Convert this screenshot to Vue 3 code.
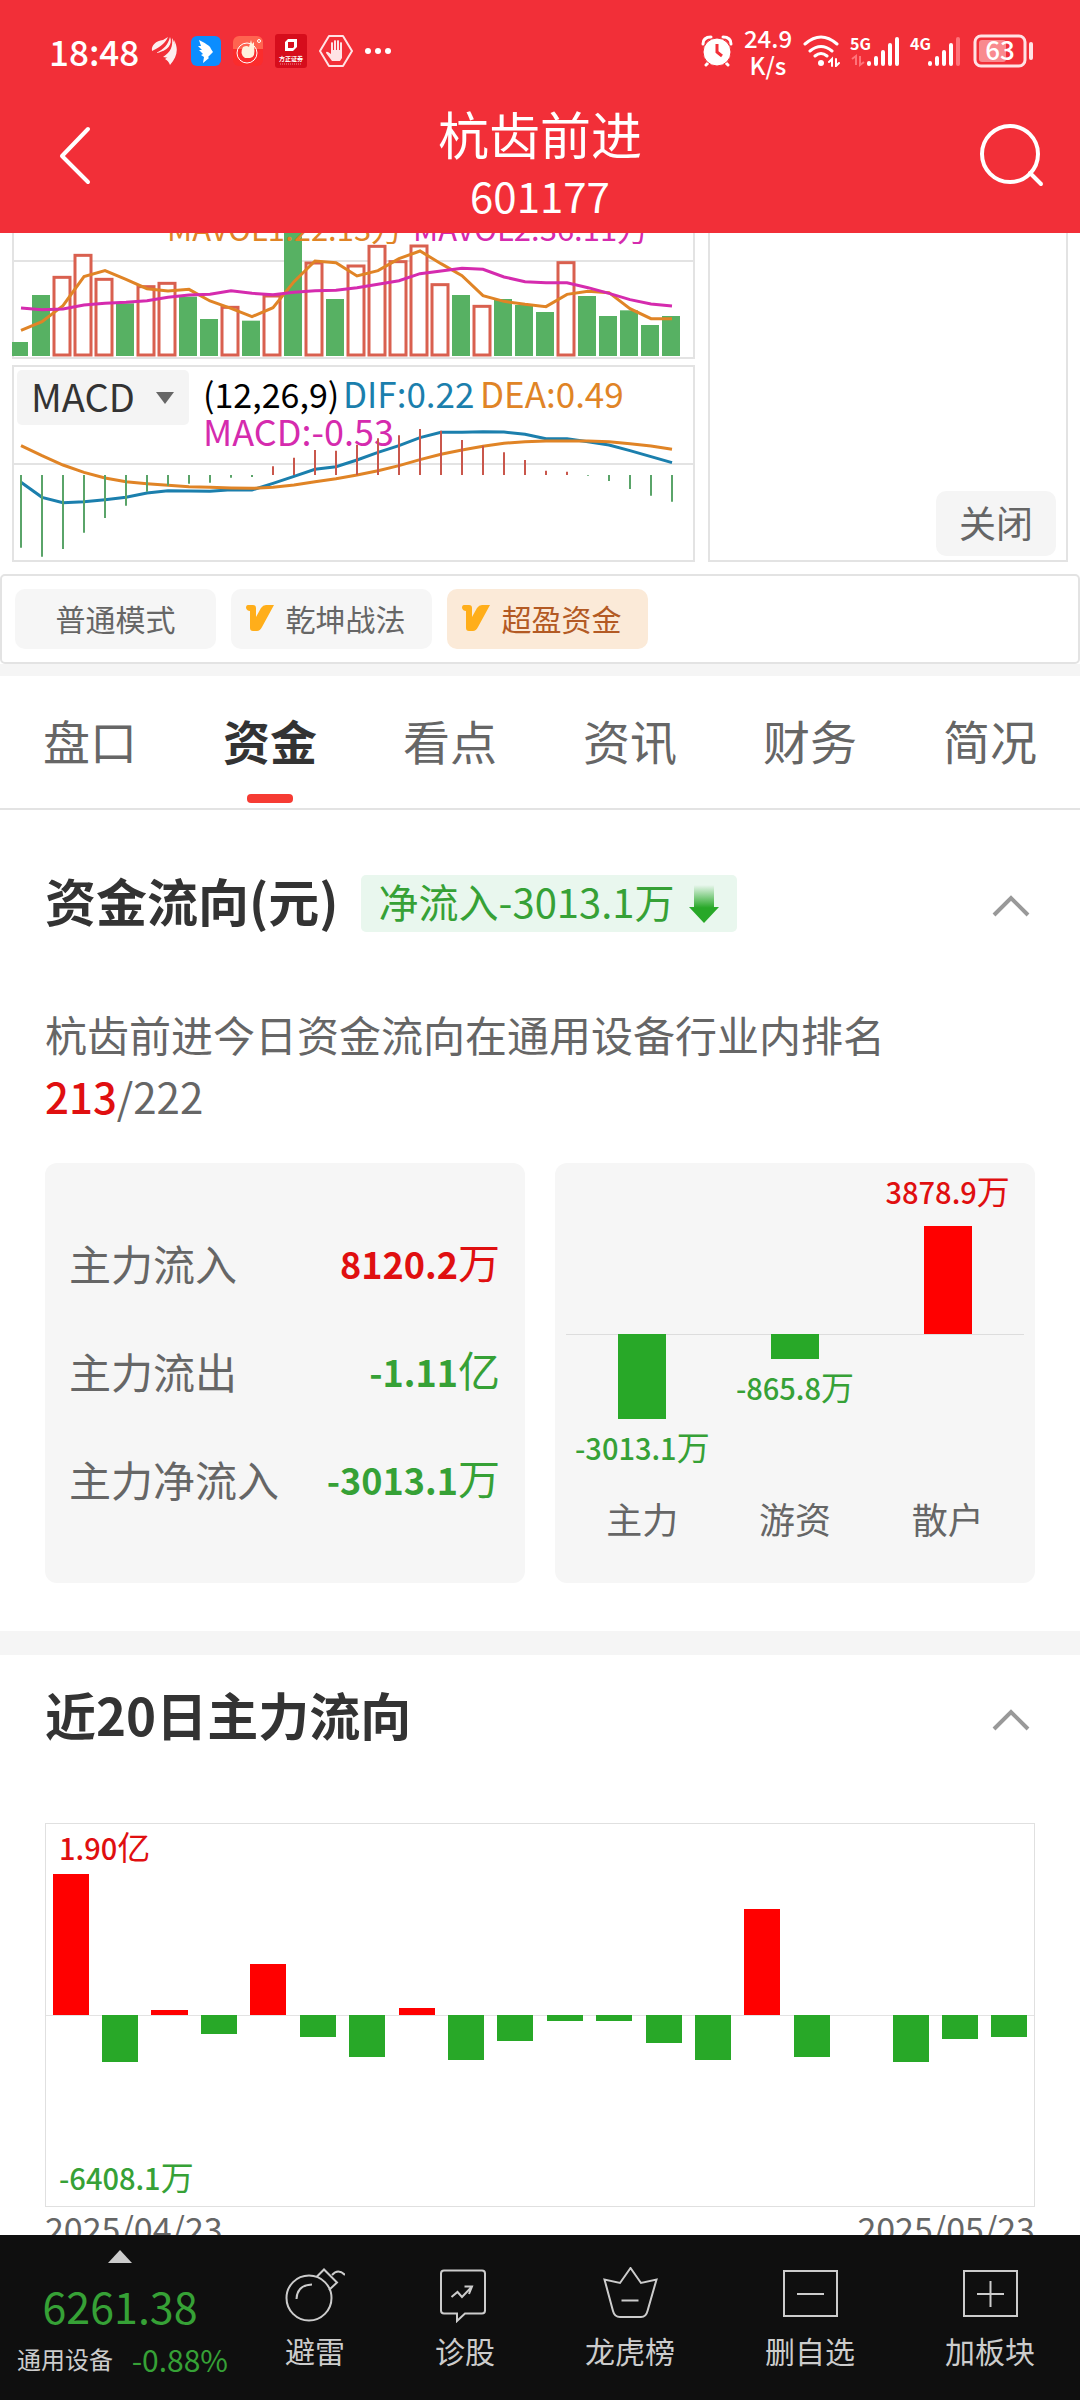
<script setup>
import { ref } from "vue";

// K-line indicator data, in thirds of a pixel from the top of each pane.
// up = hollow red candle, otherwise solid green.
const volume = [
    [327, 0], [186, 0], [130, 1], [64, 1], [136, 1], [211, 0], [158, 1], [148, 1],
    [191, 0], [258, 0], [220, 1], [263, 0], [186, 1], [-30, 0], [87, 1], [198, 0],
    [96, 1], [37, 1], [83, 1], [36, 1], [152, 1], [186, 0], [217, 1], [198, 0],
    [216, 0], [237, 0], [86, 1], [189, 0], [249, 0], [232, 0], [276, 0], [249, 0],
].map(([top, up]) => ({ top: top / 3, up: !!up }));
const mavol1 = [
    292, 266, 218, 131, 113, 139, 167, 174, 169, 204, 226, 251, 224, 146, 84, 89,
    129, 113, 77, 54, 92, 128, 188, 205, 214, 221, 184, 175, 179, 227, 257, 257,
];
const mavol2 = [
    225, 230, 228, 216, 211, 208, 203, 193, 186, 184, 173, 181, 185, 178, 173, 172,
    164, 154, 143, 122, 114, 106, 109, 132, 146, 149, 149, 164, 181, 200, 213, 219,
];
const macd = [
    548, 575, 552, 503, 459, 422, 380, 362, 356, 353, 338, 336, 304, 278, 255, 257,
    239, 220, 211, 192, 197, 225, 242, 262, 285, 317, 320, 332, 348, 372, 392, 410,
];
const dif = [
    352, 397, 413, 410, 404, 397, 384, 377, 378, 379, 374, 375, 355, 334, 313, 305,
    285, 262, 242, 218, 202, 202, 200, 201, 208, 221, 221, 230, 240, 257, 275, 293,
];
const dea = [
    242, 272, 300, 322, 339, 350, 356, 361, 365, 367, 369, 370, 367, 360, 350, 341,
    330, 317, 302, 284, 268, 255, 244, 235, 230, 228, 228, 228, 230, 236, 243, 253,
];
const line = (values) => values.map((v, i) => `${9 + i * 21},${v / 3}`).join(" ");

const indicator = ref("MACD");
const modes = ["普通模式", "乾坤战法", "超盈资金"];
const mode = ref("超盈资金");
const tabs = ["盘口", "资金", "看点", "资讯", "财务", "简况"];
const tab = ref("资金");

const flows = [
    { label: "主力流入", value: "8120.2", unit: "万", up: true },
    { label: "主力流出", value: "-1.11", unit: "亿" },
    { label: "主力净流入", value: "-3013.1", unit: "万" },
];
const groups = [
    { label: "主力", value: "-3013.1", bar: 85 },
    { label: "游资", value: "-865.8", bar: 25 },
    { label: "散户", value: "3878.9", bar: 108, up: true },
];

// bar heights around the zero axis
const days = [
    141, -47, 5, -19, 51, -22, -42, 7, -45, -26, -6, -6, -28, -45, 106, -42, 0, -47, -24, -22,
];
const axis = 191;
const dayStyle = (v) => ({
    height: Math.abs(v) + "px",
    marginTop: (v > 0 ? axis - v : axis) + "px",
});
</script>

<template>
    <div class="page">
        <header class="top">
            <div class="status">
                <div class="status__side">
                    <span class="status__time">18:48</span>
                    <svg width="28" height="30" viewBox="0 0 28 30" fill="#fff" opacity=".92">
                        <path d="M1 15C0 9 5 5 12 4l5-3c-2 5-6 9-16 14z" />
                        <path d="M5 17C13 13 17 9 19 1c3 7-2 14-14 16z" />
                        <path d="M12 21C20 16 22 10 21 2c4 6 3 14-3 20z" />
                        <path d="M19 29c-1-3-3-5-5-6 7-5 10-10 9-19 5 9 3 17-4 25z" />
                    </svg>
                    <svg width="30" height="30" viewBox="0 0 30 30">
                        <rect width="30" height="30" rx="6" fill="#0b8dff" />
                        <path d="M8 4c5 3 11 5 12 9l2 3-5 5 1 1-6 5 1-6-3-2 2-1-4-4 3 0-4-4 3 0z" fill="#fff" />
                    </svg>
                    <svg width="30" height="30" viewBox="0 0 30 30">
                        <rect width="30" height="30" rx="6" fill="#fb2c2c" />
                        <path d="M0 6a6 6 0 0 1 6-6h18a6 6 0 0 1 6 6v7H0z" fill="#ff6450" />
                        <circle cx="14" cy="17" r="10" fill="none" stroke="#fff" stroke-width="1" />
                        <path d="M10 11q4-2 6 0l2-7 1 4 2-2v5q2 10-4 11h-5q-6-4-2-11z" fill="#fff1dc" />
                        <circle cx="26" cy="5" r="1.5" fill="none" stroke="#fff" />
                    </svg>
                    <svg width="32" height="34" viewBox="0 0 32 34">
                        <rect width="32" height="34" rx="3" fill="#d60d1c" />
                        <path d="M10 8l3-3h9v8l-4 4h-8zM13 8v6h5l1-1V8z" fill="#fff" fill-rule="evenodd" />
                        <text x="16" y="27" text-anchor="middle" font-size="6" font-weight="700" fill="#fff">方正证券</text>
                        <path d="M5 30h22" stroke="#f08a90" stroke-width="1" stroke-dasharray="1 1" />
                    </svg>
                    <svg width="34" height="34" viewBox="0 0 34 34">
                        <path d="M10 2h14l9 15-9 15H10L1 17z" fill="none" stroke="#ffe3e5" stroke-width="2" stroke-linejoin="round" />
                        <path d="M13 27L7 19q0-2 2-1l3 2V9q1-2 2 0v7h1V7q1-2 2 0v9h1V7q1-2 2 0v9h1V9q1-2 2 0v15l-2 3z" fill="#ffe3e5" />
                    </svg>
                    <svg width="26" height="30" viewBox="0 0 26 30" fill="#fff">
                        <circle cx="3" cy="15" r="3" /><circle cx="13" cy="15" r="3" /><circle cx="23" cy="15" r="3" />
                    </svg>
                </div>
                <div class="status__side status__side--right">
                    <svg width="32" height="32" viewBox="0 0 32 32">
                        <path d="M2 9q0-7 8-7M30 9q0-7-8-7M5 30l4-4M27 30l-4-4" fill="none" stroke="#fff" stroke-width="3" stroke-linecap="round" />
                        <circle cx="16" cy="17" r="14" fill="#fff" stroke="#f22f38" />
                        <path d="M16 9v8l5 4" fill="none" stroke="#f22f38" stroke-width="3" />
                    </svg>
                    <span class="status__rate">24.9<br />K/s</span>
                    <svg width="37" height="32" viewBox="0 0 37 32" fill="none" stroke="#fff" stroke-width="3" stroke-linecap="round">
                        <path d="M2 9q16-14 32 0M7 16q11-9 22 0M12 21q6-5 12 0" />
                        <circle cx="18" cy="28" r="3" fill="#fff" stroke="none" />
                        <path d="M26 27l3-3v7M33 24v7l3-3" stroke-width="2" />
                    </svg>
                    <svg class="signal" width="50" height="32" viewBox="0 0 50 32">
                        <text class="status__net" x="0" y="15">5G</text>
                        <path d="M2 24l4-3v9M10 21v9l4-3" fill="none" stroke="#ff737a" stroke-width="2" />
                        <path d="M19 28v1M26 23v6M33 17v12M40 10v19M47 4v25" stroke="#fff" stroke-width="4" stroke-linecap="round" />
                    </svg>
                    <svg class="signal" width="52" height="32" viewBox="0 0 52 32">
                        <text class="status__net" x="0" y="15">4G</text>
                        <path d="M20 28v1M27 23v6M34 17v12M41 10v19" stroke="#fff" stroke-width="4" stroke-linecap="round" />
                        <path d="M48 4v25" stroke="#ff737a" stroke-width="4" stroke-linecap="round" />
                    </svg>
                    <svg class="signal" width="62" height="34" viewBox="0 0 62 34">
                        <rect x="3" y="2" width="50" height="30" rx="6" fill="none" stroke="#ffe3e5" stroke-width="3" />
                        <rect x="7" y="6" width="27" height="22" rx="3" fill="#f98a8f" />
                        <path d="M59 10v14" stroke="#ffe3e5" stroke-width="4" stroke-linecap="round" />
                        <text x="28" y="26" text-anchor="middle" font-size="26" font-weight="500" fill="#fff">63</text>
                    </svg>
                </div>
            </div>
            <div class="nav">
                <button type="button" class="nav__btn" aria-label="返回">
                    <svg width="34" height="60" viewBox="0 0 34 60"><path d="M30 4L4 31l26 26" fill="none" stroke="#fff" stroke-width="4" stroke-linecap="round" stroke-linejoin="round" /></svg>
                </button>
                <h1 class="nav__title">杭齿前进<span>601177</span></h1>
                <button type="button" class="nav__btn nav__btn--end" aria-label="搜索">
                    <svg width="66" height="66" viewBox="0 0 66 66" fill="none" stroke="#fff" stroke-width="4" stroke-linecap="round"><circle cx="31" cy="32" r="28" /><path d="M51 51l11 11" /></svg>
                </button>
            </div>
        </header>

        <main class="body">
            <section class="kline">
                <div class="kline__left">
                    <svg class="pane" viewBox="0 0 683 126">
                        <path d="M0 28h683" class="rule" />
                        <path d="M1 0v125h681V0" class="rule" />
                        <g v-for="(b, i) in volume" :key="i">
                            <rect v-if="b.up" :x="21 * i" :y="b.top + 1" width="16" :height="121 - b.top" class="candle" />
                            <rect v-else :x="Math.max(0, 21 * i - 1)" :y="b.top" :width="i ? 18 : 16" :height="123 - b.top" fill="#57b163" />
                        </g>
                        <text x="155" y="8" font-size="31" fill="#e08426">MAVOL1:22.13万</text>
                        <text x="401" y="8" font-size="31" fill="#d52bae">MAVOL2:36.11万</text>
                        <polyline :points="line(mavol1)" class="curve" stroke="#e08426" />
                        <polyline :points="line(mavol2)" class="curve" stroke="#d52bae" />
                    </svg>
                    <div class="macd">
                        <svg class="pane" viewBox="0 0 683 197">
                            <path d="M0 99h683" class="rule" />
                            <rect x="1" y="1" width="681" height="195" class="rule" />
                            <text x="191" y="43" font-size="34" fill="#000">(12,26,9)</text>
                            <text x="331" y="43" font-size="35" fill="#1b7fad">DIF:0.22</text>
                            <text x="468" y="43" font-size="35" fill="#e08426">DEA:0.49</text>
                            <text x="191" y="81" font-size="36" fill="#d52bae">MACD:-0.53</text>
                            <polyline :points="line(dif)" class="curve" stroke="#1b7fad" />
                            <polyline :points="line(dea)" class="curve" stroke="#e08426" />
                            <path
                                v-for="(v, i) in macd"
                                :key="i"
                                :d="`M${9 + i * 21} 110V${v / 3}`"
                                :stroke="v < 330 ? '#c9574c' : '#5aa469'"
                                stroke-width="2"
                            />
                        </svg>
                        <div class="picker">
                            <select v-model="indicator" aria-label="指标">
                                <option>MACD</option>
                            </select>
                            <svg width="18" height="12" viewBox="0 0 18 12"><path d="M0 0h18l-9 12z" fill="#666" /></svg>
                        </div>
                    </div>
                </div>
                <div class="kline__right">
                    <button type="button" class="close">关闭</button>
                </div>
            </section>

            <div class="modes">
                <button
                    v-for="(m, i) in modes"
                    :key="m"
                    type="button"
                    class="mode"
                    :class="{ on: m === mode }"
                    @click="mode = m"
                >
                    <svg v-if="i" width="28" height="26" viewBox="0 0 28 26">
                        <path d="M2 0h5q3 0 3 3v9l5-9q2-3 5-3h8L16 22q-2 4-5 4H7q-3 0-3-3V6Q1 6 0 3 0 0 2 0z" fill="#ffae1a" />
                    </svg>
                    {{ m }}
                </button>
            </div>

            <nav class="tabs">
                <button
                    v-for="t in tabs"
                    :key="t"
                    type="button"
                    class="tab"
                    :class="{ on: t === tab }"
                    @click="tab = t"
                >
                    {{ t }}
                </button>
            </nav>

            <section class="block">
                <div class="block__head">
                    <h2>资金流向(元)</h2>
                    <span class="badge">
                        <span class="badge__text">净流入-3013.1万</span>
                        <svg width="30" height="38" viewBox="0 0 30 38">
                            <defs>
                                <linearGradient id="fade" x1="0" y1="0" x2="0" y2="1">
                                    <stop offset="0" stop-color="#28a828" stop-opacity="0" />
                                    <stop offset=".6" stop-color="#28a828" />
                                </linearGradient>
                            </defs>
                            <path d="M5 0h20v22h5L15 38 0 22h5z" fill="url(#fade)" />
                        </svg>
                    </span>
                    <button type="button" class="fold" aria-label="收起">
                        <svg width="40" height="24" viewBox="0 0 40 24"><path d="M3 21L20 4l17 17" /></svg>
                    </button>
                </div>
                <p class="rank">杭齿前进今日资金流向在通用设备行业内排名<br /><b>213</b>/222</p>
                <div class="cards">
                    <dl class="card flows">
                        <div v-for="f in flows" :key="f.label" class="flow">
                            <dt>{{ f.label }}</dt>
                            <dd class="num" :class="{ up: f.up }"><b>{{ f.value }}</b>{{ f.unit }}</dd>
                        </div>
                    </dl>
                    <div class="card groups">
                        <div v-for="g in groups" :key="g.label" class="group">
                            <div class="group__half group__half--up">
                                <template v-if="g.up">
                                    <span class="num up"><b>{{ g.value }}</b>万</span>
                                    <i class="up" :style="{ height: g.bar + 'px' }" />
                                </template>
                            </div>
                            <div class="group__half group__half--down">
                                <template v-if="!g.up">
                                    <i :style="{ height: g.bar + 'px' }" />
                                    <span class="num"><b>{{ g.value }}</b>万</span>
                                </template>
                            </div>
                            <span class="group__label">{{ g.label }}</span>
                        </div>
                    </div>
                </div>
            </section>

            <section class="block block--days">
                <div class="block__head">
                    <h2>近20日主力流向</h2>
                    <button type="button" class="fold" aria-label="收起">
                        <svg width="40" height="24" viewBox="0 0 40 24"><path d="M3 21L20 4l17 17" /></svg>
                    </button>
                </div>
                <div class="days">
                    <span class="num up days__max"><b>1.90</b>亿</span>
                    <span class="num days__min"><b>-6408.1</b>万</span>
                    <div v-for="(v, i) in days" :key="i" class="day">
                        <i :class="{ up: v > 0 }" :style="dayStyle(v)" />
                    </div>
                </div>
                <div class="dates"><span>2025/04/23</span><span>2025/05/23</span></div>
            </section>
        </main>

        <footer class="bar">
            <div class="quote">
                <div class="quote__index">
                    <svg width="24" height="13" viewBox="0 0 24 13"><path d="M12 0l12 13H0z" fill="#ccc" /></svg>
                    <strong>6261.38</strong>
                </div>
                <span class="quote__row">通用设备<em>-0.88%</em></span>
            </div>
            <nav class="tools">
                <button type="button" class="tool">
                    <svg viewBox="0 0 60 56"><circle cx="24" cy="31" r="22.5" /><path d="M31.5 10L39 2.5l13 13L44 23M47 8q6-7 13 0M11.5 32Q12 18 27 17.5" /></svg>
                    避雷
                </button>
                <button type="button" class="tool">
                    <svg viewBox="0 0 60 56"><path d="M22 46.500H9q-3 0-3-3v-37q0-3 3-3h38q3 0 3 3v37q0 3-3 3H30L22 54zM16.500 30l6-5 4.500 5 10-10.500M29.500 19.500H37L34 27" /></svg>
                    诊股
                </button>
                <button type="button" class="tool">
                    <svg viewBox="0 0 60 56"><path d="M30.500 1L20 16 4.500 12.500 13 44q1.500 6 7 6h21q5 0 6.500-6l9-31.500L41 16zM21.500 33.500h17" /></svg>
                    龙虎榜
                </button>
                <button type="button" class="tool">
                    <svg viewBox="0 0 60 56"><path d="M4 4h53v45H4zM17 27h27" /></svg>
                    删自选
                </button>
                <button type="button" class="tool">
                    <svg viewBox="0 0 60 56"><path d="M4 4h53v45H4zM17 27h27M30.500 14v26" /></svg>
                    加板块
                </button>
            </nav>
        </footer>
    </div>
</template>

<style>
body {
    margin: 0;
}
</style>

<style scoped>
.page {
    --red: #e00f10;
    --green: #36a136;
    display: flex;
    flex-direction: column;
    height: 100vh;
    background: #fff;
    color: #666;
    font-family: "Noto Sans CJK SC", sans-serif;
}
button {
    border: none;
    padding: 0;
    background: none;
    color: inherit;
    font: inherit;
    cursor: pointer;
}
svg {
    display: block;
    flex: none;
}
h1,
h2,
p,
dl,
dd {
    margin: 0;
    font-weight: 400;
}

/* header */
.top {
    flex: none;
    background: #f22f38;
    color: #fff;
}
.status {
    height: 102px;
    padding: 0 46px 0 49px;
    box-sizing: border-box;
    display: flex;
    justify-content: space-between;
}
.status__side {
    display: flex;
    align-items: center;
    gap: 12px;
}
.status__side--right {
    gap: 10px;
}
.signal {
    overflow: visible;
}
.status__time {
    font-size: 35px;
    line-height: 48px;
    font-weight: 500;
}
.status__rate {
    width: 50px;
    text-align: center;
    font-size: 24px;
    line-height: 27px;
    font-weight: 500;
}
.status__net {
    font-size: 16px;
    font-weight: 700;
    fill: #fff;
}
.nav {
    display: flex;
    justify-content: space-between;
    align-items: flex-start;
    height: 131px;
    padding: 0 35px 0 58px;
}
.nav__btn {
    display: flex;
    align-items: center;
    width: 67px;
    height: 106px;
}
.nav__btn--end {
    justify-content: flex-end;
    width: 90px;
}
.nav__title {
    font-size: 51px;
    line-height: 62px;
    text-align: center;
}
.nav__title span {
    display: block;
    font-size: 42px;
}

.body {
    flex: 1;
    min-height: 0;
    overflow: hidden;
}

/* k-line indicators */
.kline {
    display: grid;
    grid-template-columns: 683fr 360fr;
    gap: 13px;
    padding: 0 12px;
}
.kline__left {
    display: grid;
    gap: 6px;
}
.pane {
    width: 100%;
}
.rule {
    fill: none;
    stroke: #e3e3e3;
    stroke-width: 2;
}
.candle {
    fill: #fff;
    stroke: #d9604f;
    stroke-width: 3;
}
.curve {
    fill: none;
    stroke-width: 3;
}
.macd {
    position: relative;
}
.picker {
    position: absolute;
    left: 5px;
    top: 5px;
    display: flex;
    align-items: center;
    border-radius: 5px;
    background: #f4f4f4;
}
.picker select {
    appearance: none;
    border: none;
    background: none;
    width: 172px;
    height: 55px;
    padding: 0 0 4px 14px;
    font: inherit;
    font-size: 38px;
    line-height: 51px;
    color: #333;
}
.picker svg {
    position: absolute;
    right: 15px;
    pointer-events: none;
}
.kline__right {
    display: flex;
    align-items: flex-end;
    justify-content: flex-end;
    padding: 0 10px 4px;
    border: 2px solid #e3e3e3;
    border-top: none;
}
.close {
    width: 120px;
    height: 65px;
    padding-bottom: 3px;
    border-radius: 10px;
    background: #f5f5f5;
    font-size: 37px;
}

/* mode chips */
.modes {
    display: flex;
    gap: 15px;
    margin-top: 12px;
    padding: 13px;
    border: 2px solid #e3e3e3;
    border-radius: 5px;
}
.mode {
    width: 201px;
    height: 60px;
    padding-bottom: 3px;
    display: flex;
    align-items: center;
    justify-content: center;
    gap: 12px;
    border-radius: 10px;
    background: #f6f6f6;
    font-size: 30px;
}
.mode svg {
    margin-left: -12px;
}
.mode.on {
    background: #fbead8;
    color: #b35a24;
}

/* tabs */
.tabs {
    display: flex;
    border-top: 12px solid #f5f5f5;
    border-bottom: 2px solid #e3e3e3;
}
.tab {
    position: relative;
    flex: 1;
    height: 132px;
    padding-bottom: 6px;
    font-size: 47px;
}
.tab.on {
    color: #333;
    font-weight: 700;
}
.tab.on::after {
    content: "";
    position: absolute;
    left: 50%;
    bottom: 5px;
    width: 46px;
    height: 9px;
    margin-left: -23px;
    border-radius: 4px;
    background: #f63b33;
}

/* sections */
.block {
    padding: 65px 45px 48px;
}
.block--days {
    padding-top: 34px;
    border-top: 24px solid #f5f5f5;
}
.block__head {
    display: flex;
    align-items: center;
}
.block__head h2 {
    padding-bottom: 6px;
    color: #333;
    font-size: 51px;
    line-height: 51px;
    font-weight: 700;
}
.badge {
    display: flex;
    align-items: center;
    gap: 14px;
    margin-left: 22px;
    padding: 0 18px;
    border-radius: 5px;
    background: #e9f7ee;
    color: var(--green);
    font-size: 40px;
}
.badge__text {
    padding-bottom: 4px;
    line-height: 53px;
}
.fold {
    margin-left: auto;
    padding: 8px 4px 4px;
}
.fold path {
    fill: none;
    stroke: #999;
    stroke-width: 4;
}
.rank {
    margin-top: 71px;
    font-size: 42px;
    line-height: 62px;
}
.rank b {
    color: var(--red);
    font-weight: 500;
}
.cards {
    display: grid;
    grid-template-columns: 1fr 1fr;
    gap: 30px;
    margin-top: 36px;
}
.card {
    border-radius: 12px;
    background: #f6f6f6;
}
.num {
    color: var(--green);
    font-size: 33px;
    line-height: 40px;
    white-space: nowrap;
}
.num b {
    font-size: 29px;
    font-weight: 500;
}
.num.up {
    color: var(--red);
}
i {
    display: block;
    background: #28a828;
}
i.up {
    background: #f00;
}
.flows {
    display: flex;
    flex-direction: column;
    justify-content: center;
    padding: 0 25px 6px 24px;
    font-size: 42px;
}
.flow {
    display: flex;
    align-items: center;
    justify-content: space-between;
    height: 108px;
}
.flow .num {
    font-size: 42px;
}
.flow .num b {
    font-size: 36px;
    font-weight: 700;
}
.groups {
    display: grid;
    grid-template-columns: repeat(3, 1fr);
    padding: 0 11px 43px;
}
.group,
.group__half {
    display: flex;
    flex-direction: column;
    align-items: center;
}
.group i {
    width: 48px;
}
.group__half {
    align-self: stretch;
}
.group__half--up {
    height: 171px;
    justify-content: flex-end;
    gap: 15px;
}
.group__half--down {
    height: 161px;
    gap: 7px;
    border-top: 1px solid #ddd;
}
.group__half--down i {
    margin-top: -1px;
}
.group__label {
    font-size: 36px;
    line-height: 44px;
}

/* 20-day chart */
.days {
    position: relative;
    display: flex;
    height: 382px;
    margin-top: 77px;
    border: 1px solid #e0e0e0;
    background: linear-gradient(#e3e3e3, #e3e3e3) 0 191px / 100% 1px no-repeat;
}
.day {
    flex: 1;
    display: flex;
    align-items: flex-start;
    justify-content: center;
}
.day i {
    width: 73%;
}
.days__max,
.days__min {
    position: absolute;
    left: 13px;
}
.days__max {
    top: 2px;
}
.days__min {
    bottom: 9px;
}
.dates {
    display: flex;
    justify-content: space-between;
    margin-top: 1px;
    font-size: 34px;
    line-height: 40px;
}

/* bottom bar */
.bar {
    flex: none;
    display: flex;
    height: 165px;
    padding: 0 45px 0 17px;
    background: #0f0f0f;
    color: #ccc;
}
.quote {
    width: 211px;
    margin-right: 57px;
    padding-top: 15px;
}
.quote__index {
    display: flex;
    flex-direction: column;
    align-items: center;
    padding-right: 5px;
}
.quote strong {
    margin: 16px 0 10px;
    color: var(--green);
    font-size: 43px;
    line-height: 52px;
    font-weight: 400;
}
.quote__row {
    display: flex;
    justify-content: space-between;
    font-size: 24px;
    line-height: 36px;
}
.quote em {
    color: var(--green);
    font-size: 30px;
    font-style: normal;
}
.tools {
    flex: 1;
    display: flex;
    justify-content: space-between;
    align-items: flex-start;
}
.tool {
    display: flex;
    flex-direction: column;
    align-items: center;
    gap: 7px;
    padding-top: 32px;
    font-size: 30px;
    line-height: 40px;
}
.tool svg {
    width: 60px;
    height: 56px;
    fill: none;
    stroke: #ccc;
    stroke-width: 2;
}
</style>
